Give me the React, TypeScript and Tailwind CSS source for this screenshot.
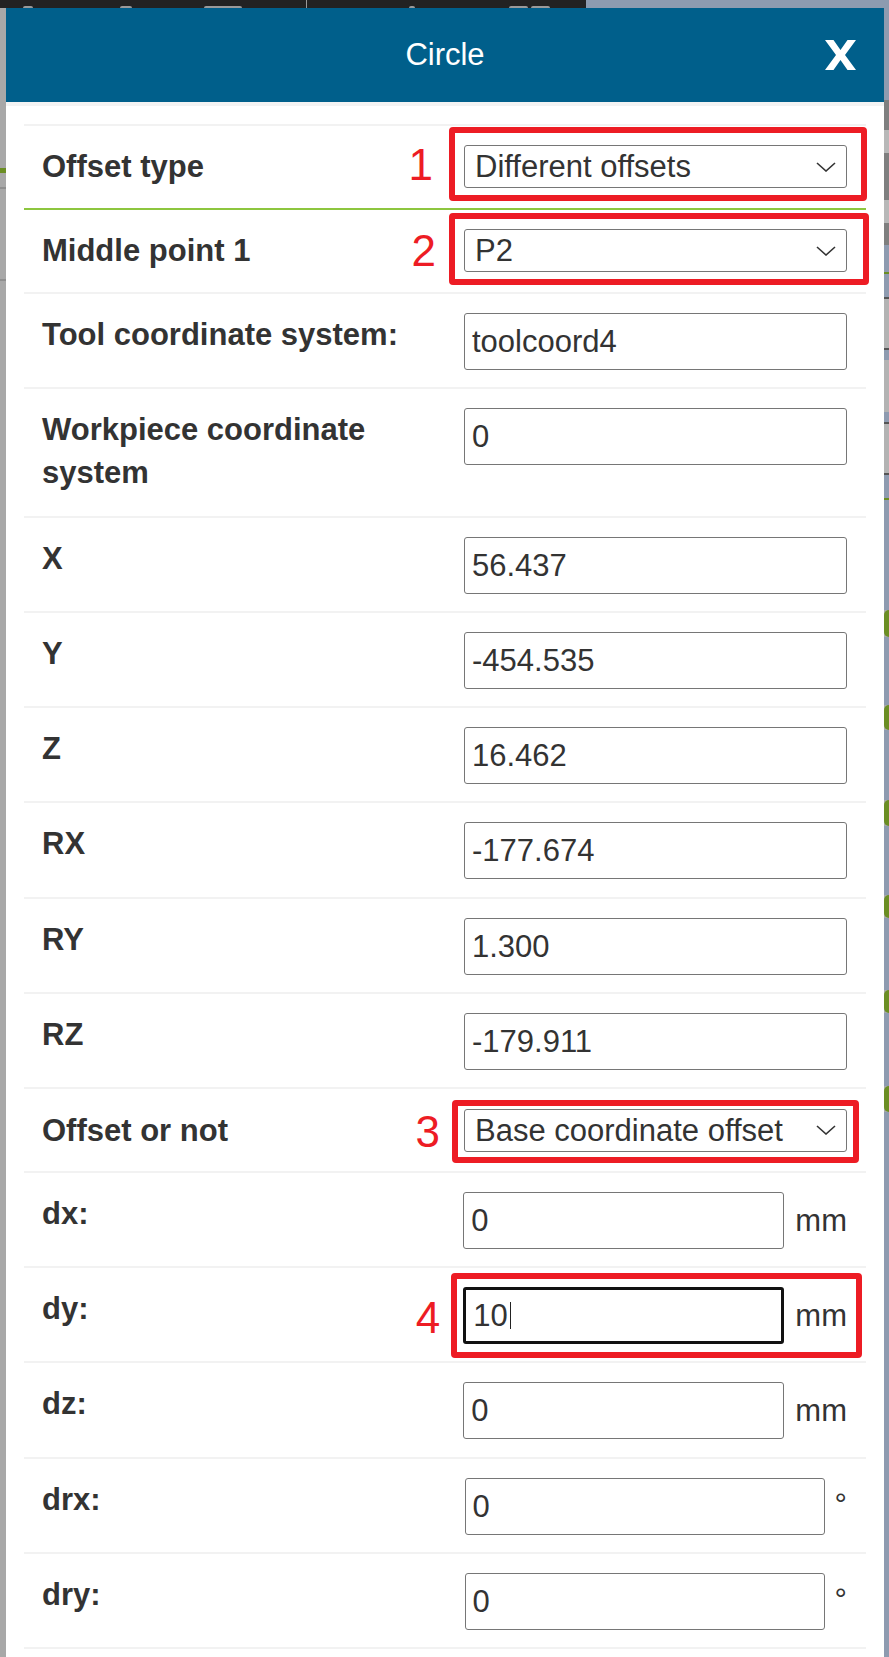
import clsx from 'clsx';

type Field = {
  label: string;
  kind: 'select' | 'input';
  value: string;
  unit?: 'mm' | '°';
  mark?: 1 | 2 | 3 | 4;
  focused?: boolean;
  green?: boolean;
};

const fields: Field[] = [
  { label: 'Offset type', kind: 'select', value: 'Different offsets', mark: 1, green: true },
  { label: 'Middle point 1', kind: 'select', value: 'P2', mark: 2 },
  { label: 'Tool coordinate system:', kind: 'input', value: 'toolcoord4' },
  { label: 'Workpiece coordinate system', kind: 'input', value: '0' },
  { label: 'X', kind: 'input', value: '56.437' },
  { label: 'Y', kind: 'input', value: '-454.535' },
  { label: 'Z', kind: 'input', value: '16.462' },
  { label: 'RX', kind: 'input', value: '-177.674' },
  { label: 'RY', kind: 'input', value: '1.300' },
  { label: 'RZ', kind: 'input', value: '-179.911' },
  { label: 'Offset or not', kind: 'select', value: 'Base coordinate offset', mark: 3 },
  { label: 'dx:', kind: 'input', value: '0', unit: 'mm' },
  { label: 'dy:', kind: 'input', value: '10', unit: 'mm', mark: 4, focused: true },
  { label: 'dz:', kind: 'input', value: '0', unit: 'mm' },
  { label: 'drx:', kind: 'input', value: '0', unit: '°' },
  { label: 'dry:', kind: 'input', value: '0', unit: '°' },
];

// red annotation frames drawn over the screenshot
const marks = {
  1: { box: '-left-[15px] -right-[20px] -top-[18px] -bottom-[13px]', num: 'right-[calc(100%+31px)] -mt-[2px]' },
  2: { box: '-left-[15px] -right-[22px] -top-[16px] -bottom-[13px]', num: 'right-[calc(100%+28px)]' },
  3: { box: '-left-[12px] -right-[12px] -top-[9px] -bottom-[11px]', num: 'right-[calc(100%+24px)] mt-[2px]' },
  4: { box: '-left-[12px] -right-[15px] -top-[14px] -bottom-[14px]', num: 'right-[calc(100%+23px)] mt-[2px]' },
};

// bits of the page behind the dialog, peeking out at the right edge
const G = '#6b8e23';
const B = '#8e9bb0';
const rightStrip: [number, string][] = [
  [92, B], [30, '#7f7f7f'], [23, '#b8b8b8'], [47, '#7f7f7f'], [23, '#b8b8b8'], [22, '#7f7f7f'],
  [27, B], [2, G], [23, B], [2, '#555'], [49, '#b3b3b3'], [2, '#555'],
  [10, B], [52, '#b3b3b3'], [10, B], [2, '#555'], [49, '#b3b3b3'], [2, '#555'],
  [23, B], [2, G], [110, B], [27, G], [68, B], [25, G], [70, B], [26, G],
  [69, B], [23, G], [72, B], [23, G], [73, B], [26, G], [600, B],
];

function Chevron() {
  return (
    <svg width="20" height="10" viewBox="0 0 20 10" className="shrink-0">
      <path d="M1 1 L10 9 L19 1" fill="none" stroke="#333" strokeWidth="1.6" />
    </svg>
  );
}

function CloseIcon() {
  return (
    <svg width="31" height="30" viewBox="0 0 31 30">
      <polygon
        points="0,0 8.5,0 15.5,10 22.5,0 31,0 20,15 31,30 22.5,30 15.5,20 8.5,30 0,30 11,15"
        fill="#fff"
      />
    </svg>
  );
}

function Control({ field }: { field: Field }) {
  const mark = field.mark ? marks[field.mark] : null;

  let body;
  if (field.kind === 'select') {
    body = (
      <div className="w-[383px] h-[43px] border border-[#767676] rounded-[3px] bg-white flex items-center justify-between pl-[10px] pr-[10px]">
        <span className="text-[31px] text-[#333] leading-none">{field.value}</span>
        <Chevron />
      </div>
    );
  } else {
    const box = (
      <div
        className={clsx(
          'h-[57px] rounded-[3px] bg-white flex items-center pl-[7px]',
          field.focused ? 'border-[3px] border-[#111]' : 'border border-[#767676]',
          field.unit === 'mm' ? 'w-[321px]' : field.unit === '°' ? 'w-[360px]' : 'w-[383px]'
        )}
      >
        <span className="text-[31px] text-[#333] leading-none">{field.value}</span>
        {field.focused && <span className="w-[1.5px] h-[27px] bg-[#222] ml-[2px]" />}
      </div>
    );
    body = field.unit ? (
      <div className="flex items-center">
        {box}
        <span
          className={clsx(
            'text-[31px] text-[#333] leading-none',
            field.unit === 'mm' ? 'ml-[11px]' : 'ml-[10px] -mt-[3px]'
          )}
        >
          {field.unit}
        </span>
      </div>
    ) : (
      box
    );
  }

  return (
    <div className="relative shrink-0">
      {body}
      {mark && (
        <>
          <span className={clsx('absolute border-[6px] border-[#ed1c24] rounded-[4px] pointer-events-none', mark.box)} />
          <span
            className={clsx(
              'absolute top-1/2 -translate-y-1/2 text-[44px] leading-none text-[#ed1c24]',
              mark.num
            )}
          >
            {field.mark}
          </span>
        </>
      )}
    </div>
  );
}

function FieldRow({ field }: { field: Field }) {
  const isSelect = field.kind === 'select';
  return (
    <div
      className={clsx(
        'flex justify-between pl-[18px] pr-[19px] border-b-2',
        field.green ? 'border-[#8dc63f]' : 'border-[#f2f2f2]',
        isSelect ? 'items-center py-[19.5px]' : 'items-start pt-[19px] pb-[17.2px]'
      )}
    >
      <div className={clsx('w-[400px] text-[31px] font-bold leading-[43px] text-[#333]', !isSelect && 'mb-[5px]')}>
        {field.label}
      </div>
      <Control field={field} />
    </div>
  );
}

export default function App() {
  return (
    <div className="w-[889px] h-[1657px] overflow-hidden flex flex-col bg-[#a9a9a9] font-['Liberation_Sans',Arial,sans-serif]">
      <div className="h-[8px] flex shrink-0">
        <div className="w-[586px] bg-[#222222] flex items-end">
          <span className="ml-[23px] w-[10px] h-[2px] rounded-t bg-[#9a9a9a]" />
          <span className="ml-[87px] w-[12px] h-[2px] rounded-t bg-[#9a9a9a]" />
          <span className="ml-[72px] w-[38px] h-[2px] rounded-t bg-[#9a9a9a]" />
          <span className="ml-[64px] w-[1px] h-[8px] bg-[#9a9a9a]" />
          <span className="ml-[102px] w-[6px] h-[2px] rounded-t bg-[#9a9a9a]" />
          <span className="ml-[94px] w-[19px] h-[2px] rounded-t bg-[#9a9a9a]" />
          <span className="ml-[3px] w-[19px] h-[2px] rounded-t bg-[#9a9a9a]" />
        </div>
        <div className="flex-1 bg-[#8d9bb0]" />
      </div>
      <div className="flex flex-1 min-h-0">
        <div className="w-[6px] bg-[#a8a8a8] flex flex-col">
          <span className="mt-[160px] h-[5px] bg-[#6b8e23]" />
          <span className="mt-[14px] h-[2px] bg-[#8f8f8f]" />
          <span className="mt-[90px] h-[2px] bg-[#8f8f8f]" />
        </div>
        <div className="flex-1 flex flex-col bg-white">
          <div className="h-[94px] shrink-0 bg-[#005f8b] grid grid-cols-[1fr_auto_1fr] items-center">
            <div />
            <h2 className="text-[31px] text-white">Circle</h2>
            <div className="flex justify-end pr-[28px]">
              <button className="cursor-pointer">
                <CloseIcon />
              </button>
            </div>
          </div>
          <div className="border-t-4 border-[#f3f3f3] pt-[17.5px] px-[18px]">
            <div className="border-t-2 border-[#f2f2f2]">
              {fields.map((f) => (
                <FieldRow key={f.label} field={f} />
              ))}
            </div>
          </div>
        </div>
        <div className="w-[5px] flex flex-col">
          {rightStrip.map(([h, c], i) => (
            <span
              key={i}
              className={clsx('shrink-0', c === G && h > 10 && 'rounded-l-full')}
              style={{ height: h, backgroundColor: c }}
            />
          ))}
        </div>
      </div>
    </div>
  );
}
